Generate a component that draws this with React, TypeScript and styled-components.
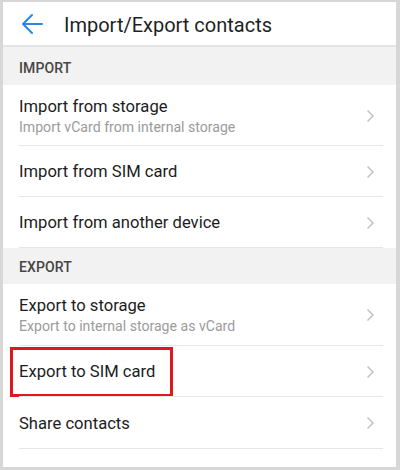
import React from "react";
import styled, { createGlobalStyle } from "styled-components";

const Global = createGlobalStyle`
  html, body { margin: 0; padding: 0; background: #ffffff; }
  * { box-sizing: border-box; }
`;

const Frame = styled.div`
  width: 400px;
  height: 470px;
  border-style: solid;
  border-color: #d7d7d7;
  border-width: 2px 4px 3px 3px;
  background: #ffffff;
  font-family: Roboto, "Noto Sans", sans-serif;
  display: flex;
  flex-direction: column;
  overflow: hidden;
`;

const Header = styled.div`
  height: 45px;
  flex: none;
  display: flex;
  align-items: center;
  border-bottom: 2px solid #e4e4e4;
  padding-left: 17px;
  gap: 20px;
`;

const Title = styled.div`
  font-size: 20px;
  color: #1f1f1f;
  padding-top: 2px;
`;

const SectionHead = styled.div<{ $h: number }>`
  height: ${(p) => p.$h}px;
  flex: none;
  background: #f2f2f2;
  display: flex;
  align-items: flex-end;
  padding: 0 0 9px 16px;
  font-size: 14px;
  font-weight: 500;
  color: #454545;
  letter-spacing: 0.1px;
`;

const Row = styled.div<{ $h: number }>`
  position: relative;
  height: ${(p) => p.$h}px;
  flex: none;
  display: flex;
  align-items: center;
  padding: 0 21px 0 16px;
  &::after {
    content: "";
    position: absolute;
    left: 16px;
    right: 13px;
    bottom: 0;
    height: 1px;
    background: #e6e6e6;
  }
`;

const Texts = styled.div`
  flex: 1;
  display: flex;
  flex-direction: column;
  gap: 3px;
`;

const Main = styled.div`
  font-size: 16.6px;
  color: #1c1c1c;
`;

const Sub = styled.div`
  font-size: 14.1px;
  color: #9b9b9b;
`;

const Highlight = styled.div`
  position: absolute;
  left: 7px;
  top: 1px;
  width: 163px;
  height: 50px;
  border: 3px solid #e2161f;
`;

const Chevron = () => (
  <svg width="10" height="16" viewBox="0 0 10 16">
    <path d="M2.5 2.5 L8 8 L2.5 13.5" fill="none" stroke="#bdbdbd" strokeWidth="1.4" />
  </svg>
);

const BackArrow = () => (
  <svg width="24" height="24" viewBox="0 0 24 24">
    <path
      d="M22 12 H3 M12 3 L3 12 L12 21"
      fill="none"
      stroke="#2a86e0"
      strokeWidth="2"
      strokeLinecap="round"
      strokeLinejoin="round"
    />
  </svg>
);

type Item = { title: string; sub?: string; h: number; mark?: boolean };

const ItemRow = ({ title, sub, h, mark }: Item) => (
  <Row $h={h}>
    {mark && <Highlight />}
    <Texts>
      <Main>{title}</Main>
      {sub && <Sub>{sub}</Sub>}
    </Texts>
    <Chevron />
  </Row>
);

export default function App() {
  return (
    <>
      <Global />
      <Frame>
        <Header>
          <BackArrow />
          <Title>Import/Export contacts</Title>
        </Header>
        <SectionHead $h={38}>IMPORT</SectionHead>
        <ItemRow title="Import from storage" sub="Import vCard from internal storage" h={61} />
        <ItemRow title="Import from SIM card" h={51} />
        <ItemRow title="Import from another device" h={51} />
        <SectionHead $h={36}>EXPORT</SectionHead>
        <ItemRow title="Export to storage" sub="Export to internal storage as vCard" h={62} />
        <ItemRow title="Export to SIM card" h={51} mark />
        <ItemRow title="Share contacts" h={52} />
      </Frame>
    </>
  );
}
